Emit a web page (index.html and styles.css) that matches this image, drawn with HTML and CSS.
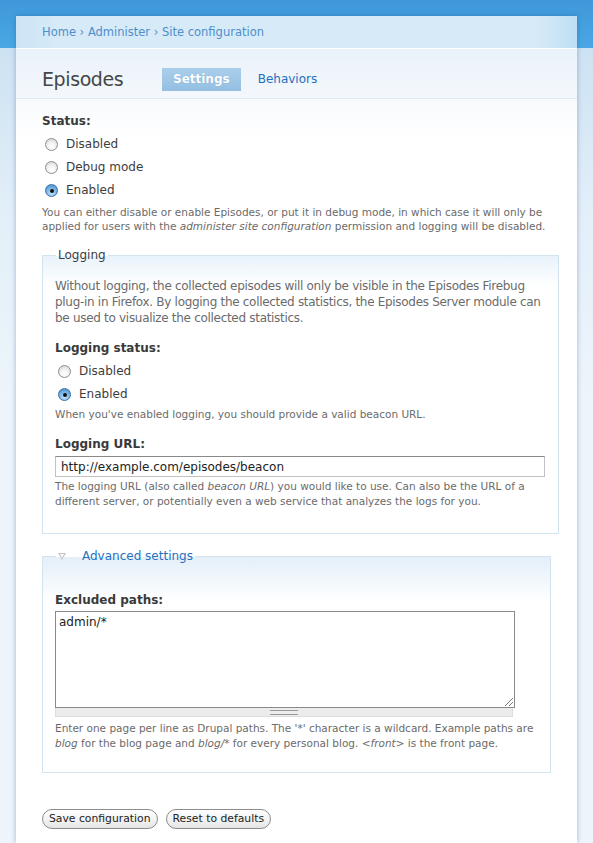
FILE: index.html
```html
<!DOCTYPE html>
<html>
<head>
<meta charset="utf-8">
<link rel="stylesheet" href="styles.css">
</head>
<body>
<div class="panel">
  <div class="crumbs"><a href="#">Home</a> › <a href="#">Administer</a> › <a href="#">Site configuration</a></div>
  <div class="titlebar">
    <h1 class="title">Episodes</h1>
    <span class="tab active">Settings</span>
    <a class="tab" href="#">Behaviors</a>
  </div>
  <div class="content">
    <div class="label">Status:</div>
    <div class="radio"><span class="rb"></span>Disabled</div>
    <div class="radio"><span class="rb"></span>Debug mode</div>
    <div class="radio"><span class="rb on"></span>Enabled</div>
    <div class="desc">You can either disable or enable Episodes, or put it in debug mode, in which case it will only be applied for users with the <em>administer site configuration</em> permission and logging will be disabled.</div>

    <fieldset class="fs logging">
      <legend>Logging</legend>
      <p class="intro">Without logging, the collected episodes will only be visible in the Episodes Firebug plug-in in Firefox. By logging the collected statistics, the Episodes Server module can be used to visualize the collected statistics.</p>
      <div class="label">Logging status:</div>
      <div class="radio"><span class="rb"></span>Disabled</div>
      <div class="radio"><span class="rb on"></span>Enabled</div>
      <div class="desc desc-tight">When you've enabled logging, you should provide a valid beacon URL.</div>
      <div class="label url-label">Logging URL:</div>
      <input class="text" type="text" value="http://example.com/episodes/beacon">
      <div class="desc desc15">The logging URL (also called <em>beacon URL</em>) you would like to use. Can also be the URL of a different server, or potentially even a web service that analyzes the logs for you.</div>
    </fieldset>

    <fieldset class="fs advanced">
      <legend><span class="tri"></span><a href="#">Advanced settings</a></legend>
      <div class="label">Excluded paths:</div>
      <div class="area-wrap"><textarea class="area">admin/*</textarea></div>
      <div class="grip"><span></span></div>
      <div class="desc desc15 desc-after-grip">Enter one page per line as Drupal paths. The '*' character is a wildcard. Example paths are <em>blog</em> for the blog page and <em>blog/*</em> for every personal blog. <em>&lt;front&gt;</em> is the front page.</div>
    </fieldset>

    <div class="buttons">
      <button class="btn">Save configuration</button>
      <button class="btn">Reset to defaults</button>
    </div>
  </div>
</div>
</body>
</html>
```
FILE: styles.css
```css
html, body { margin: 0; padding: 0; }
body {
  font-family: "DejaVu Sans", Verdana, sans-serif;
  font-size: 12px;
  color: #3d3d3d;
  background: linear-gradient(to bottom, #3f98da 0, #4aa7e3 48px, #cde2f2 48px, #e4eff9 220px, #edf4fb 400px, #edf4fb 100%);
  min-height: 843px;
}
a { color: #1f6fc0; text-decoration: none; }
.panel {
  margin: 16px 16px 0 16px;
  width: 561px;
  height: 827px;
  background: #fff;
  box-shadow: 0 0 5px rgba(20, 70, 130, 0.35);
}
.crumbs {
  height: 33px;
  box-sizing: border-box;
  padding: 9px 0 0 26px;
  line-height: 14px;
  font-size: 11.5px;
  color: #5b93c9;
  background: linear-gradient(to right, #cce4f6 0, #d6eaf8 40px, #d6eaf8 520px, #bfdff5 100%);
  border-bottom: 1px solid #fff;
}
.crumbs a { color: #4f8ecb; }
.titlebar {
  height: 50px;
  box-sizing: border-box;
  padding: 19px 0 0 26px;
  display: flex;
  align-items: flex-start;
  background: linear-gradient(to bottom, #eaf2fa, #f4f8fc);
  border-bottom: 1px solid #e2eaf1;
}
.title {
  margin: 0;
  font-weight: normal;
  font-size: 19px;
  letter-spacing: -0.4px;
  line-height: 23px;
  color: #464646;
  width: 120px;
}
.tab {
  height: 23px;
  line-height: 23px;
  font-size: 12px;
  padding: 0 11px;
  margin-right: 6px;
}
.tab.active {
  background: linear-gradient(to bottom, #aacfeb, #94bfe2);
  color: #fff;
  font-weight: bold;
  text-shadow: 0 0 1px rgba(60,110,160,0.4);
}
.content {
  padding: 13px 18px 0 26px;
  background: linear-gradient(to bottom, #f8fafd, #fff 40px);
}
.label {
  font-weight: bold;
  line-height: 18px;
  color: #3a3a3a;
}
.radio {
  height: 23px;
  display: flex;
  align-items: center;
  line-height: 23px;
  color: #3d3d3d;
}
.label + .radio { margin-top: 3px; }
.rb {
  width: 11px;
  height: 11px;
  border-radius: 50%;
  border: 1px solid #8e8e8e;
  background: radial-gradient(circle at 50% 70%, #fff 0, #f4f4f4 40%, #cfcfcf 100%);
  margin: 0 8px 0 3px;
  position: relative;
  box-sizing: content-box;
}
.rb.on {
  border-color: #3c6fa8;
  background: radial-gradient(circle at 50% 75%, #c9e6fb 0, #7fb9e8 45%, #3f86cf 100%);
}
.rb.on::after {
  content: "";
  position: absolute;
  left: 3.5px;
  top: 3.5px;
  width: 4px;
  height: 4px;
  border-radius: 50%;
  background: #111;
}
.desc {
  font-size: 10.5px;
  line-height: 14px;
  color: #6b6b6b;
  margin-top: 3px;
}
.desc-tight { margin-top: 1px; }
.desc15 { line-height: 15px; margin-top: 2px; }
.desc-after-grip { margin-top: 4px; }
.fs {
  margin: 14px 0 0 0;
  border: 1px solid #d3e4f1;
  padding: 15px 12px 24px 12px;
  background: linear-gradient(to bottom, #e8f2fb 0, #fff 30px);
  min-width: 0;
}
.fs legend {
  padding: 0 2px;
  font-size: 12px;
  color: #3d3d3d;
  line-height: 16px;
  margin-left: 1px;
}
.intro {
  margin: 0 0 13px 0;
  line-height: 16px;
  color: #6b6b6b;
  letter-spacing: -0.3px;
}
.url-label { margin-top: 14px; }
.text {
  display: block;
  width: 490px;
  height: 21px;
  box-sizing: border-box;
  margin: 3px 0 0 0;
  border: 1px solid #c2c2c2;
  border-top-color: #8a8a8a;
  padding: 0 5px;
  font-family: "DejaVu Sans", Verdana, sans-serif;
  font-size: 12px;
  color: #222;
  outline: none;
}
.advanced {
  margin: 14px 8px 0 0;
  padding-top: 27px;
  padding-bottom: 21px;
  background: linear-gradient(to bottom, #e3eff9 0, #fff 45px);
}
.advanced legend { display: flex; align-items: center; }
.tri {
  width: 0;
  height: 0;
  border-left: 4px solid transparent;
  border-right: 4px solid transparent;
  border-top: 7px solid #c4c4c4;
  margin-right: 16px;
  position: relative;
}
.tri::after {
  content: "";
  position: absolute;
  left: -2.5px;
  top: -6px;
  border-left: 2.5px solid transparent;
  border-right: 2.5px solid transparent;
  border-top: 4.5px solid #fff;
}
.advanced legend a { color: #2470c2; }
.area-wrap {
  position: relative;
  width: 460px;
  margin-top: 2px;
}
.area-wrap::after {
  content: "";
  position: absolute;
  right: 2px;
  bottom: 2px;
  width: 8px;
  height: 8px;
  background: linear-gradient(135deg, transparent 0, transparent 45%, #777 45%, #777 55%, transparent 55%, transparent 70%, #777 70%, #777 80%, transparent 80%);
}
.area {
  display: block;
  width: 460px;
  height: 97px;
  box-sizing: border-box;
  margin: 0;
  border: 1px solid #8a8a8a;
  padding: 3px 3px;
  font-family: "DejaVu Sans", Verdana, sans-serif;
  font-size: 12px;
  color: #222;
  resize: none;
  outline: none;
}
.grip {
  width: 458px;
  height: 9px;
  box-sizing: border-box;
  background: #ececec;
  border: 1px solid #dedede;
  border-top: none;
  display: flex;
  justify-content: center;
  align-items: center;
}
.grip span {
  width: 28px;
  height: 3px;
  border-top: 1px solid #999;
  border-bottom: 1px solid #999;
}
.buttons {
  margin-top: 36px;
  display: flex;
  gap: 8px;
}
.btn {
  height: 20px;
  padding: 0 6px;
  border: 1px solid #8c8c8c;
  border-radius: 10px;
  background: linear-gradient(to bottom, #fff, #f1f1f1 60%, #e4e4e4);
  font-family: "DejaVu Sans", Verdana, sans-serif;
  font-size: 10.8px;
  color: #222;
  line-height: 18px;
}
```
